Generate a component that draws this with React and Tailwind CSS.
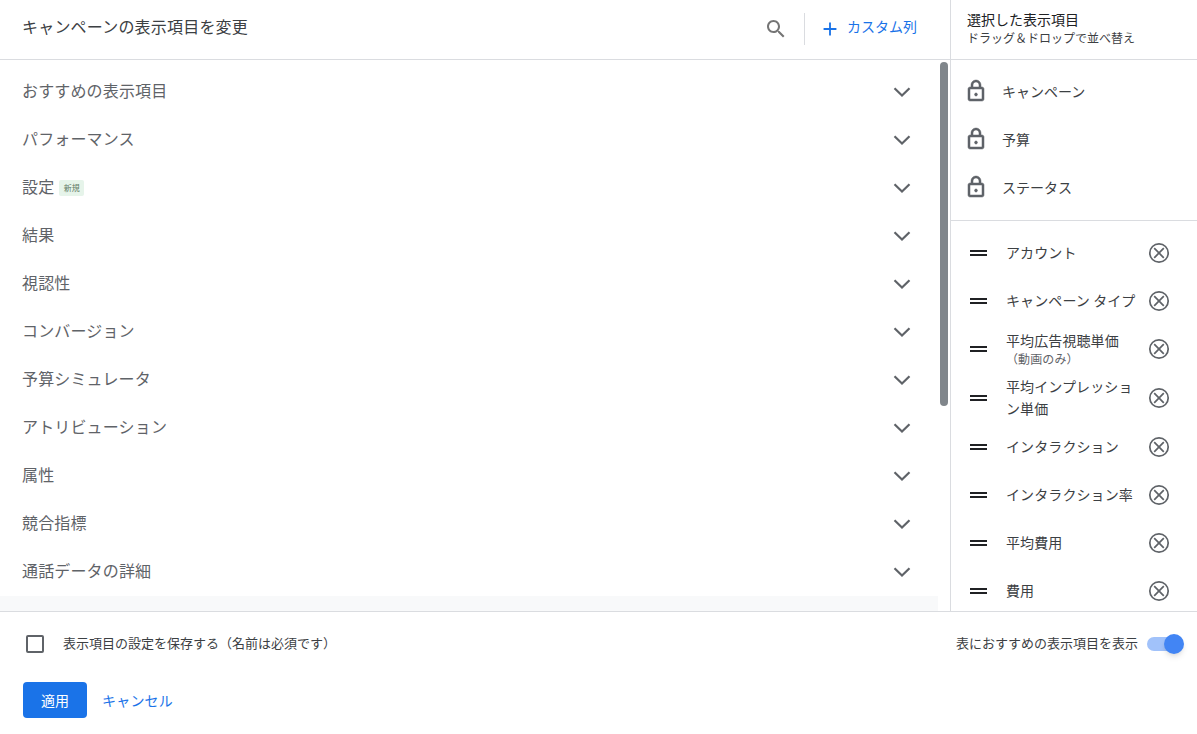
import React from "react";

const sections = [
  "おすすめの表示項目",
  "パフォーマンス",
  "設定",
  "結果",
  "視認性",
  "コンバージョン",
  "予算シミュレータ",
  "アトリビューション",
  "属性",
  "競合指標",
  "通話データの詳細",
];

const locked = ["キャンペーン", "予算", "ステータス"];

const LockIcon = () => (
  <svg width="24" height="24" viewBox="0 0 24 24" fill="#5f6368" stroke="#5f6368" strokeWidth="0.5" className="shrink-0">
    <path d="M18 8h-1V6c0-2.76-2.24-5-5-5S7 3.24 7 6v2H6c-1.1 0-2 .9-2 2v10c0 1.1.9 2 2 2h12c1.1 0 2-.9 2-2V10c0-1.1-.9-2-2-2zM9 6c0-1.66 1.34-3 3-3s3 1.34 3 3v2H9V6zm9 14H6V10h12v10zm-6-3c.8 0 1.5-.7 1.5-1.5S12.800 14 12 14s-1.500.7-1.500 1.500S11.200 17 12 17z" />
  </svg>
);

const RemoveIcon = () => (
  <svg width="24" height="24" viewBox="0 0 24 24" fill="none" stroke="#5f6368" strokeWidth="1.7" className="shrink-0">
    <circle cx="12" cy="12" r="9.2" />
    <path d="M7.200 7.200l9.600 9.600M16.800 7.200l-9.600 9.600" />
  </svg>
);

const SearchIcon = () => (
  <svg width="24" height="24" viewBox="0 0 24 24" fill="#757575" className="shrink-0">
    <path d="M15.5 14h-.79l-.28-.27C15.41 12.59 16 11.11 16 9.5 16 5.91 13.09 3 9.5 3S3 5.91 3 9.5 5.91 16 9.5 16c1.61 0 3.09-.59 4.23-1.57l.27.28v.79l5 4.99L20.49 19l-4.99-5zm-6 0C7.01 14 5 11.99 5 9.5S7.01 5 9.5 5 14 7.01 14 9.5 11.99 14 9.5 14z" />
  </svg>
);

const PlusIcon = () => (
  <svg width="22" height="22" viewBox="0 0 18 18" fill="#1a73e8" className="shrink-0">
    <path d="M14.25 9.75h-4.5v4.5h-1.5v-4.5h-4.500v-1.500h4.500v-4.500h1.500v4.500h4.500z" />
  </svg>
);

const Chevron = () => (
  <svg width="18" height="12" viewBox="0 0 18 12" fill="none" stroke="#5f6368" strokeWidth="2.200" className="shrink-0 mt-[1px]">
    <path d="M1.500 2.200L9 9.500l7.500-7.300" />
  </svg>
);

const DragRow = ({ children, h = "h-12", textClass = "pb-[2px]" }) => (
  <div className={`flex items-center ${h} pl-[19px] pr-[26px]`}>
    <div className="flex flex-col gap-[2px] w-[17px] shrink-0">
      <div className="h-[2px] bg-[#202124]" />
      <div className="h-[2px] bg-[#202124]" />
    </div>
    <div className={`flex-1 min-w-0 pl-[19px] pr-[8px] text-[14px] leading-[22px] tracking-[0.1px] text-[#3c4043] ${textClass}`}>{children}</div>
    <RemoveIcon />
  </div>
);

export default function App() {
  return (
    <div
      className="w-[1197px] h-[734px] overflow-hidden bg-white flex flex-col"
      style={{ fontFamily: '"Noto Sans CJK JP", "Noto Sans", sans-serif' }}
    >
      <div className="flex h-[612px] border-b border-[#dadce0]">
        <div className="w-[951px] flex flex-col border-r border-[#dadce0]">
          <div className="h-[60px] shrink-0 flex items-center border-b border-[#dadce0] pl-[22px] pr-[33px] pb-[2px]">
            <div className="flex-1 mb-[6px] text-[16px] tracking-[0.2px] text-[#3c4043]">キャンペーンの表示項目を変更</div>
            <SearchIcon />
            <div className="w-px h-8 bg-[#dadce0] ml-[16px] mr-[14px]" />
            <PlusIcon />
            <span className="ml-[6px] mb-[4px] text-[14px] text-[#1a73e8]">カスタム列</span>
          </div>
          <div className="relative flex-1 flex flex-col min-h-0">
            <div className="flex-1 pt-[7px] pl-[22px] pr-[39px]">
              {sections.map((name) => (
                <div key={name} className="h-12 flex items-center justify-between">
                  <div className="flex items-center pb-[2px] text-[16px] tracking-[0.15px] text-[#5f6368]">
                    {name}
                    {name === "設定" && (
                      <span className="ml-[5px] mt-[4px] h-4 w-[25px] rounded-[2px] bg-[#e6f4ea] text-[8px] leading-4 text-center text-[#5f7a66]">
                        新規
                      </span>
                    )}
                  </div>
                  <Chevron />
                </div>
              ))}
            </div>
            <div className="h-[15px] w-[938px] bg-[#f8f9fa]" />
            <div className="absolute left-[940px] top-[2px] w-2 h-[344px] rounded bg-[#80868b]" />
          </div>
        </div>
        <div className="flex-1 flex flex-col min-w-0">
          <div className="h-[60px] shrink-0 border-b border-[#dadce0] pl-[16px] pt-[10px]">
            <div className="text-[14px] leading-[19px] text-[#202124]">選択した表示項目</div>
            <div className="text-[12px] leading-[18px] text-[#3c4043]">ドラッグ＆ドロップで並べ替え</div>
          </div>
          <div className="h-[161px] shrink-0 pt-[7px] border-b border-[#dadce0]">
            {locked.map((name) => (
              <div key={name} className="h-12 flex items-center pl-[13px]">
                <LockIcon />
                <span className="ml-[14px] text-[14px] text-[#3c4043]">{name}</span>
              </div>
            ))}
          </div>
          <div className="flex-1 pt-2 overflow-hidden">
            <DragRow>アカウント</DragRow>
            <DragRow>キャンペーン タイプ</DragRow>
            <DragRow textClass="">
              <div className="leading-[20px]">平均広告視聴単価</div>
              <div className="text-[12px] leading-[18px] text-[#5f6368]">（動画のみ）</div>
            </DragRow>
            <DragRow h="h-[50px]">平均インプレッション単価</DragRow>
            <DragRow>インタラクション</DragRow>
            <DragRow>インタラクション率</DragRow>
            <DragRow>平均費用</DragRow>
            <DragRow>費用</DragRow>
          </div>
        </div>
      </div>
      <div className="flex-1 flex flex-col pl-[23px] pr-[16px]">
        <div className="h-[55px] pt-[9px] flex items-center">
          <div className="w-[18px] h-[18px] ml-[3px] border-2 border-[#5f6368] rounded-[2px]" />
          <span className="ml-[19px] flex-1 pb-[2px] text-[13px] text-[#3c4043]">表示項目の設定を保存する（名前は必須です）</span>
          <span className="pb-[2px] text-[13px] text-[#3c4043]">表におすすめの表示項目を表示</span>
          <div className="relative ml-[9px] w-[34px] h-[14px] rounded-full bg-[#a1c2fa]">
            <div className="absolute -right-[3px] -top-[3px] w-5 h-5 rounded-full bg-[#4285f4] shadow-md" />
          </div>
        </div>
        <div className="mt-[15px] flex items-center">
          <button className="w-16 h-9 rounded bg-[#1a73e8] text-white text-[14px]">適用</button>
          <span className="ml-[15px] text-[14px] tracking-[0.2px] text-[#1a73e8]">キャンセル</span>
        </div>
      </div>
    </div>
  );
}
